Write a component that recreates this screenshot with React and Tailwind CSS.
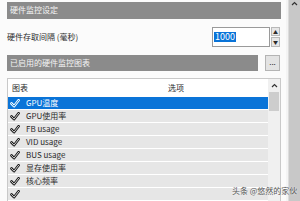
import React from 'react';

const rows = ['GPU温度', 'GPU使用率', 'FB usage', 'VID usage', 'BUS usage', '显存使用率', '核心频率', ''];

function Check({ light }) {
  return (
    <svg width="10" height="9" viewBox="0 0 10 9" className="shrink-0">
      <path d="M1.5 4.5 L4 7.2 L8.6 1.3" fill="none" stroke={light ? '#ffffff' : '#1a1a1a'} strokeWidth="2.6" strokeLinecap="round" strokeLinejoin="round" />
      <path d="M1.5 4.5 L4 7.2 L8.6 1.3" fill="none" stroke={light ? '#0078d7' : '#e6e6e6'} strokeWidth="0.9" strokeLinecap="round" strokeLinejoin="round" />
    </svg>
  );
}

function Up() {
  return (
    <svg width="7" height="5" viewBox="0 0 7 5">
      <path d="M1 4 L3.5 1.5 L6 4" fill="none" stroke="#333" strokeWidth="1.2" />
    </svg>
  );
}

export default function App() {
  return (
    <div className="relative w-[300px] h-[201px] overflow-hidden bg-[#fbfbfb] flex text-[8px] text-[#2a2a2a]" style={{ fontFamily: '"Noto Sans CJK SC", "Liberation Sans", sans-serif' }}>
      <div className="w-[286px] pl-[7px] pr-[5px] flex flex-col">
        <div className="mt-[2px] h-[20px] bg-[#8b8b8b] text-[#f4f4f4] pl-[3px] flex items-center">硬件监控设定</div>

        <div className="mt-[8px] h-[20px] flex items-center justify-between pr-[1px]">
          <span>硬件存取间隔 (毫秒)</span>
          <div className="flex h-[20px]">
            <div className="w-[58px] border border-[#9a9a9a] bg-white flex items-center pl-[1px]">
              <span className="bg-[#0a74d8] text-white px-[1px] leading-[10px] text-[9px]">1000</span>
            </div>
            <div className="w-[10px] flex flex-col gap-[1px] pl-[1px]">
              <div className="flex-1 bg-[#e6e6e6] border border-[#b8b8b8] flex items-center justify-center text-[5px] leading-none">▲</div>
              <div className="flex-1 bg-[#e6e6e6] border border-[#b8b8b8] flex items-center justify-center text-[5px] leading-none">▼</div>
            </div>
          </div>
        </div>

        <div className="mt-[8px] h-[20px] flex gap-[7px]">
          <div className="w-[251px] bg-[#8b8b8b] text-[#f4f4f4] pl-[3px] flex items-center">已启用的硬件监控图表</div>
          <div className="w-[15px] bg-[#e3e3e3] border border-[#b4b4b4] flex items-end justify-center pb-[4px] leading-none">...</div>
        </div>

        <div className="mt-[7px] flex-1 border border-[#c9c9c9] border-b-0 bg-white flex">
          <div className="flex-1 flex flex-col">
            <div className="h-[18px] flex items-center">
              <span className="w-[160px] pl-[4px]">图表</span>
              <span>选项</span>
            </div>
            {rows.map((r, i) => (
              <div key={i} className={`h-[13px] shrink-0 flex items-center gap-[6px] pl-[2px] border-b border-white ${i === 0 ? 'bg-[#0a74d8] text-white' : 'bg-[#e6e6e6]'}`}>
                <Check light={i === 0} />
                <span>{r}</span>
              </div>
            ))}
          </div>
          <div className="w-[12px] bg-[#f0f0f0] flex flex-col items-center">
            <div className="h-[13px] flex items-center"><Up /></div>
            <div className="w-[10px] h-[19px] bg-[#cdcdcd]"></div>
          </div>
        </div>
      </div>

      <div className="w-[14px] flex">
        <div className="w-[2px] bg-[#f4f4f4]"></div>
        <div className="flex-1 bg-[#c8c8c8] border-l border-[#dcdcdc] flex justify-center pt-[1px]"><Up /></div>
      </div>

      <div className="absolute left-[232px] top-[185px] text-[8px] text-[#555] whitespace-nowrap" style={{ textShadow: '0 0 2px #fff' }}>
        头条 @悠然的家伙
      </div>
    </div>
  );
}
